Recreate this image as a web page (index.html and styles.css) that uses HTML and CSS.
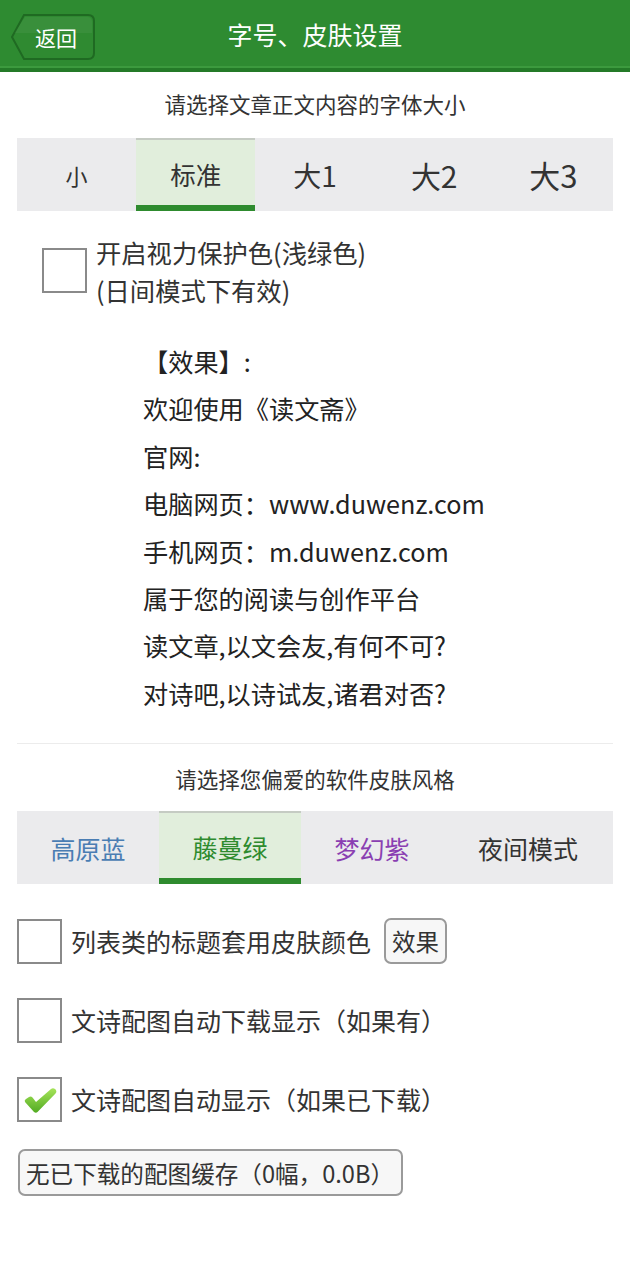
FILE: index.html
```html
<!DOCTYPE html>
<html lang="zh-CN">
<head>
  <meta charset="UTF-8">
  <title>字号、皮肤设置</title>
  <meta name="viewport" content="width=device-width, initial-scale=1.0">
  <link rel="stylesheet" href="styles.css">
</head>
<body>
  <header class="topbar">
    <a class="back" href="#">
      <svg class="back-shape" width="86" height="48" viewBox="0 0 86 48">
        <path d="M14 2 H78 Q84 2 84 8 V40 Q84 46 78 46 H14 L2 24 Z" fill="#2f8a31" stroke="#1f6a22" stroke-width="2"/>
        <path d="M15 4 H77 Q82 4 82 9 V20 H4 L4.6 20 Z" fill="rgba(255,255,255,0.05)"/>
      </svg>
      <span>返回</span>
    </a>
    <h1>字号、皮肤设置</h1>
  </header>

  <main class="content">
    <p class="section-title">请选择文章正文内容的字体大小</p>
    <div class="tabs tabs-5">
      <div class="tab fs-1">小</div>
      <div class="tab fs-2 active">标准</div>
      <div class="tab fs-3">大1</div>
      <div class="tab fs-4">大2</div>
      <div class="tab fs-5">大3</div>
    </div>

    <label class="eye-option">
      <span class="box"></span>
      <span class="eye-text">开启视力保护色(浅绿色)<br>(日间模式下有效)</span>
    </label>

    <div class="preview">
      <p class="bracket">【效果】:</p>
      <p>欢迎使用《读文斋》</p>
      <p>官网:</p>
      <p>电脑网页：www.duwenz.com</p>
      <p>手机网页：m.duwenz.com</p>
      <p>属于您的阅读与创作平台</p>
      <p>读文章,以文会友,有何不可?</p>
      <p>对诗吧,以诗试友,诸君对否?</p>
    </div>

    <hr class="divider">

    <p class="section-title">请选择您偏爱的软件皮肤风格</p>
    <div class="tabs tabs-4">
      <div class="tab skin-blue">高原蓝</div>
      <div class="tab skin-green active">藤蔓绿</div>
      <div class="tab skin-purple">梦幻紫</div>
      <div class="tab skin-night">夜间模式</div>
    </div>

    <div class="options">
      <div class="option">
        <span class="box"></span>
        <span>列表类的标题套用皮肤颜色</span>
        <button class="small-btn">效果</button>
      </div>
      <div class="option">
        <span class="box"></span>
        <span>文诗配图自动下载显示（如果有）</span>
      </div>
      <div class="option">
        <span class="box checked">
          <svg width="36" height="30" viewBox="0 0 36 30">
            <defs>
              <linearGradient id="tick" x1="0" y1="0" x2="0" y2="1">
                <stop offset="0" stop-color="#a6e45a"/>
                <stop offset="1" stop-color="#52ab22"/>
              </linearGradient>
            </defs>
            <path d="M3 16 Q2 14 4 13 L7 11 Q9 10 10.5 11.5 L14 16 L29 3 Q31 1.5 33 3 L34 4 Q35 6 33.5 7.5 L15.5 26 Q14 27.5 12 26 Z" fill="url(#tick)"/>
          </svg>
        </span>
        <span>文诗配图自动显示（如果已下载）</span>
      </div>
    </div>

    <button class="cache-btn">无已下载的配图缓存（0幅，0.0B）</button>
  </main>
</body>
</html>
```

FILE: styles.css
```css
body {
  margin: 0;
  background: #fff;
  color: #333;
  font-family: "Noto Sans CJK SC", "Noto Sans", sans-serif;
}

.topbar {
  height: 68px;
  background: #2e8b31;
  border-bottom: 4px solid #247a28;
  box-shadow: inset 0 -2px 0 #3c9a3e;
  display: flex;
  align-items: center;
  justify-content: center;
  position: relative;
}
.topbar h1 {
  margin: 0;
  font-size: 25px;
  font-weight: normal;
  color: #fff;
}
.back {
  position: absolute;
  left: 10px;
  top: 13px;
  width: 86px;
  height: 48px;
  display: flex;
  align-items: center;
  justify-content: center;
  text-decoration: none;
}
.back-shape {
  position: absolute;
  left: 0;
  top: 0;
}
.back span {
  position: relative;
  color: #fff;
  font-size: 21px;
  padding-left: 6px;
}

.content {
  padding: 0 17px;
}
.section-title {
  margin: 0;
  text-align: center;
  font-size: 21.5px;
  color: #333;
  line-height: 26px;
}
.content > .section-title:first-child {
  padding-top: 19px;
  padding-bottom: 21px;
}

.tabs {
  display: flex;
  height: 73px;
  background: #ebebed;
}
.tab {
  flex: 1;
  display: flex;
  align-items: center;
  justify-content: center;
  box-sizing: border-box;
  color: #333;
  font-size: 24px;
}
.tab.active {
  background: #e1eedc;
  border-top: 2px solid #c5cbc3;
  border-bottom: 6px solid #2e8b2e;
  padding-top: 2px;
}
.fs-1 { font-size: 22px; }
.fs-2 { font-size: 25.5px; }
.fs-3 { font-size: 28px; }
.fs-4 { font-size: 30px; }
.fs-5 { font-size: 31px; }

.tabs-4 .tab {
  flex: 0 0 142px;
  font-size: 25px;
}
.tabs-4 .tab:last-child { flex: 1; }
.skin-blue { color: #4a7db3; }
.skin-green { color: #2e8b2e; }
.skin-purple { color: #8a3fb2; }
.skin-night { color: #333; }

.box {
  width: 45px;
  height: 45px;
  box-sizing: border-box;
  border: 2px solid #8a8a8a;
  flex-shrink: 0;
  display: flex;
  align-items: center;
  justify-content: center;
}

.eye-option {
  display: flex;
  align-items: flex-start;
  margin: 22px 0 0 25px;
  gap: 9px;
}
.eye-option .box {
  margin-top: 15px;
}
.eye-text {
  font-size: 25.3px;
  line-height: 38px;
  color: #333;
}

.preview {
  margin: 29px 0 0 126px;
}
.preview p {
  margin: 0;
  font-size: 25.2px;
  line-height: 47.4px;
  color: #222;
  white-space: nowrap;
}

.divider {
  border: none;
  border-top: 1px solid #ececec;
  margin: 26px 0 0;
}
.divider + .section-title {
  padding-top: 22px;
  padding-bottom: 19px;
}

.options {
  margin-top: 34px;
  display: flex;
  flex-direction: column;
  gap: 33px;
}
.option {
  display: flex;
  align-items: center;
  gap: 9px;
  height: 46px;
  font-size: 25px;
  color: #333;
}
.box.checked svg {
  margin-top: 3px;
}
.small-btn {
  margin-left: 4px;
  height: 46px;
  padding: 0 6px;
  font-family: inherit;
  font-size: 23.5px;
  color: #333;
  background: #f7f7f7;
  border: 2px solid #9a9a9a;
  border-radius: 7px;
}

.cache-btn {
  display: block;
  margin: 27px 0 0 1px;
  height: 47px;
  width: 385px;
  padding: 0 6px;
  text-align: left;
  font-family: inherit;
  font-size: 23.6px;
  color: #333;
  background: #f7f7f7;
  border: 2px solid #9a9a9a;
  border-radius: 7px;
  white-space: nowrap;
}
```
